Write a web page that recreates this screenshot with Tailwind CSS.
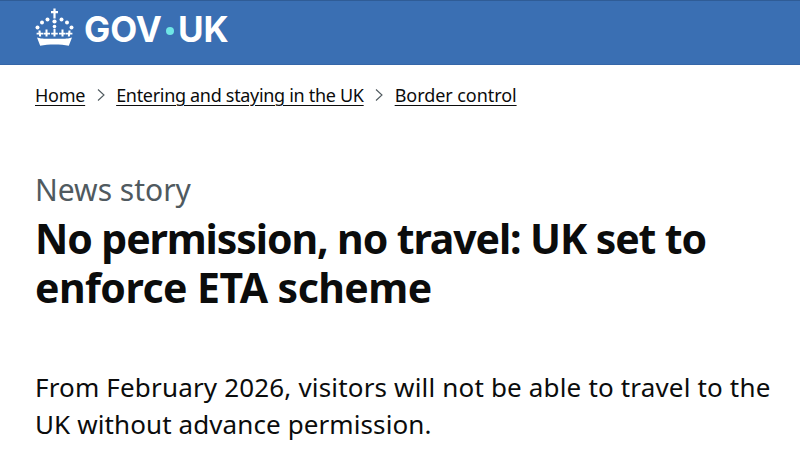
<!DOCTYPE html>
<html>
<head>
<script src="https://cdn.jsdelivr.net/npm/@tailwindcss/browser@4"></script>
</head>
<body class="w-[800px] h-[476px] overflow-hidden bg-white text-[#0b0c0c] font-['Inter','Liberation_Sans',sans-serif]">
<header class="h-[65px] bg-[#3a6fb3] border-t border-[#2f5c96] border-b border-b-[#3566a8] flex items-start pl-[34px] pt-[7px] gap-[9px]">
  <svg class="w-[41px] h-[38px]" viewBox="0 0 41 38" fill="#fff">
    <path d="M19.4 0.5h2.2v2.600h2.400v2.200h-2.400v5.200h-2.200V5.300H17V3.100h2.400z"/>
    <circle cx="20.5" cy="13.5" r="2.1"/><circle cx="13.5" cy="11.5" r="2"/><circle cx="27.5" cy="11.5" r="2"/>
    <circle cx="8" cy="14.5" r="2"/><circle cx="33" cy="14.5" r="2"/><circle cx="3.5" cy="19.5" r="2"/><circle cx="37.5" cy="19.5" r="2"/>
    <circle cx="20.5" cy="18.5" r="1.8"/>
    <path d="M4.500 22.500h2l.2 2.300h2.400v1.800H6.900l.3 2h-2l-.3-2H2.600v-1.800h2zM11.500 21.500h2v3.300h2.500v1.800h-2.500v2h-2v-2H9.600v-1.800h1.900zM19.500 20.800h2v4h2.300v1.800h-2.300v2h-2v-2h-2.300v-1.800h2.300zM27.500 21.500h2v3.300h1.900v1.800h-1.900v2h-2v-2H25v-1.800h2.500zM34.500 22.500h2l-.1 2.300h2v1.800h-2.300l-.3 2h-2l.3-2h-2.300v-1.800h2.400z"/>
    <path d="M3 29.500c3 .8 5 1.200 7 1.200h21c2 0 4-.4 7-1.200l-3.200 8.300c-4-.9-9-1.300-14.300-1.300s-10.300.4-14.300 1.300z"/>
  </svg>
  <div class="flex items-center h-[43px] text-white font-bold text-[35px] leading-[43px]">
    <span>GOV</span><span class="w-[8px] h-[8px] mx-[4px] mt-[2px] rounded-full bg-[#6fe6e6]"></span><span>UK</span>
  </div>
</header>
<main class="px-[35px]">
  <nav class="flex items-center h-[60px] text-[18px] leading-[24px] tracking-[-0.27px] font-['Noto_Sans','Inter',sans-serif]">
    <a class="underline underline-offset-[3px] decoration-[1px]">Home</a>
    <svg class="w-[8px] h-[12px] ml-[12px] mr-[11px]" viewBox="0 0 8 12" fill="none" stroke="#505a5f" stroke-width="1.100"><path d="M1 .5 7 6l-6 5.500"/></svg>
    <a class="underline underline-offset-[3px] decoration-[1px] tracking-[-0.31px]">Entering and staying in the UK</a>
    <svg class="w-[8px] h-[12px] ml-[11px] mr-[12px]" viewBox="0 0 8 12" fill="none" stroke="#505a5f" stroke-width="1.100"><path d="M1 .5 7 6l-6 5.500"/></svg>
    <a class="underline underline-offset-[3px] decoration-[1px] tracking-[-0.06px]">Border control</a>
  </nav>
  <p class="mt-[47px] text-[#505a5f] text-[30px] leading-[36px] font-['Noto_Sans','Inter',sans-serif]">News story</p>
  <h1 class="mt-[6px] font-bold text-[41px] leading-[49px] tracking-[-1.1px] whitespace-nowrap font-['Noto_Sans','Inter',sans-serif]">No permission, no travel: UK set to<br><span class="tracking-[-0.55px]">enforce ETA scheme</span></h1>
  <p class="mt-[57px] text-[26px] leading-[37px] tracking-[0.17px] whitespace-nowrap font-['Noto_Sans','Inter',sans-serif]">From February 2026, visitors will not be able to travel to the<br><span class="tracking-[0.1px]">UK without advance permission.</span></p>
</main>
</body>
</html>
